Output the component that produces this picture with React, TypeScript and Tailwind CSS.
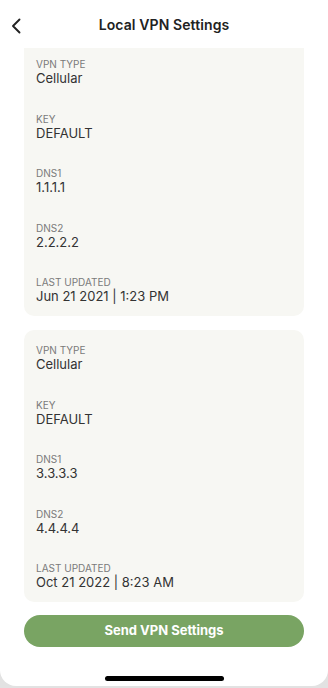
import React from 'react';

interface VpnConfig {
  id: string;
  type: string;
  key: string;
  dns1: string;
  dns2: string;
  updated: string;
}

const CONFIGS: VpnConfig[] = [
  { id: 'a', type: 'Cellular', key: 'DEFAULT', dns1: '1.1.1.1', dns2: '2.2.2.2', updated: 'Jun 21 2021 | 1:23 PM' },
  { id: 'b', type: 'Cellular', key: 'DEFAULT', dns1: '3.3.3.3', dns2: '4.4.4.4', updated: 'Oct 21 2022 | 8:23 AM' },
];

const Field: React.FC<{ label: string; value: string }> = ({ label, value }) => (
  <div className="flex flex-col">
    <span className="text-[10px] leading-[12px] uppercase text-[#7a7a7a]">{label}</span>
    <span className="text-[13px] leading-[17px] text-[#333333]">{value}</span>
  </div>
);

const ConfigCard: React.FC<{ cfg: VpnConfig; first?: boolean }> = ({ cfg, first }) => (
  <div
    className={`bg-[#f7f7f3] px-[12px] pb-[11px] flex flex-col gap-[25.5px] ${
      first ? 'pt-[10px] rounded-b-[10px]' : 'pt-[14px] rounded-[10px]'
    }`}
  >
    <Field label="VPN Type" value={cfg.type} />
    <Field label="Key" value={cfg.key} />
    <Field label="DNS1" value={cfg.dns1} />
    <Field label="DNS2" value={cfg.dns2} />
    <Field label="Last Updated" value={cfg.updated} />
  </div>
);

export default function App() {
  return (
    <div className="w-[328px] h-[688px] bg-[#e2e2e2] overflow-hidden" style={{ fontFamily: 'Inter, "Noto Sans", sans-serif' }}>
      <div className="h-[686px] bg-white rounded-b-[16px] flex flex-col">
        {/* header */}
        <header className="h-[48px] flex items-center justify-center relative shrink-0">
          <button className="absolute left-[10px] top-[17px] w-[12px] h-[18px] flex items-center justify-center">
            <svg width="10" height="16" viewBox="0 0 10 16" fill="none">
              <path d="M8.5 1.5 L2 8 L8.5 14.5" stroke="#222" strokeWidth="1.9" strokeLinecap="round" strokeLinejoin="round" />
            </svg>
          </button>
          <h1 className="text-[14px] font-semibold text-[#222222] tracking-[0.1px]">Local VPN Settings</h1>
        </header>

        <main className="px-[24px] flex flex-col">
          <ConfigCard cfg={CONFIGS[0]} first />
          <div className="h-[14px]" />
          <ConfigCard cfg={CONFIGS[1]} />
          <button className="mt-[13px] h-[32px] rounded-full bg-[#79a463] text-white text-[13px] font-bold">
            Send VPN Settings
          </button>
        </main>

        <div className="flex-1 flex items-end justify-center pb-[5px]">
          <div className="w-[119px] h-[5px] rounded-full bg-black" />
        </div>
      </div>
    </div>
  );
}
